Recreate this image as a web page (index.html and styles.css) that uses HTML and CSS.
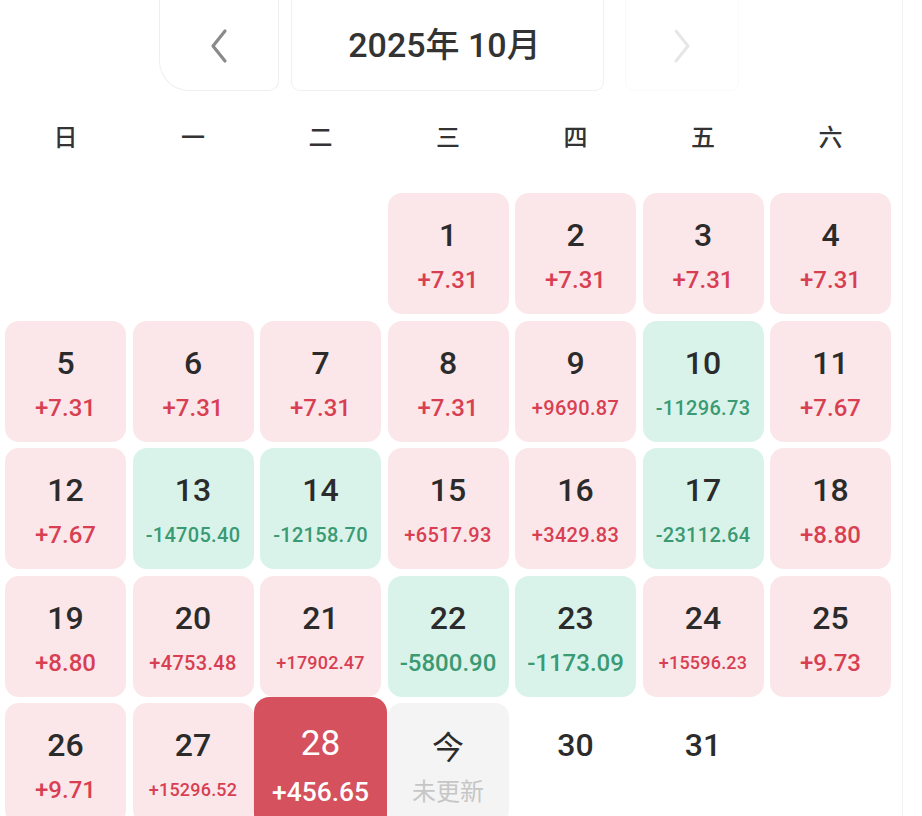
FILE: index.html
```html
<!DOCTYPE html>
<html lang="zh-CN">
<head>
<meta charset="utf-8">
<title>2025年 10月</title>
<link rel="stylesheet" href="styles.css">
</head>
<body>
<div class="page">
  <div class="header">
    <div class="nav-btn prev">
      <svg width="26" height="36" viewBox="0 0 26 36"><path d="M19 3 L7 18 L19 33" fill="none" stroke="#8a8a8a" stroke-width="3.2" stroke-linecap="round" stroke-linejoin="round"/></svg>
    </div>
    <div class="title">2025年 10月</div>
    <div class="nav-btn next">
      <svg width="26" height="36" viewBox="0 0 26 36"><path d="M7 3 L19 18 L7 33" fill="none" stroke="#e6e6e6" stroke-width="3" stroke-linecap="round" stroke-linejoin="round"/></svg>
    </div>
  </div>

  <div class="weekdays">
    <div>日</div><div>一</div><div>二</div><div>三</div><div>四</div><div>五</div><div>六</div>
  </div>

  <div class="grid">
    <div class="blank"></div><div class="blank"></div><div class="blank"></div>
    <div class="cell up"><span class="d">1</span><span class="v lg">+7.31</span></div>
    <div class="cell up"><span class="d">2</span><span class="v lg">+7.31</span></div>
    <div class="cell up"><span class="d">3</span><span class="v lg">+7.31</span></div>
    <div class="cell up"><span class="d">4</span><span class="v lg">+7.31</span></div>

    <div class="cell up"><span class="d">5</span><span class="v lg">+7.31</span></div>
    <div class="cell up"><span class="d">6</span><span class="v lg">+7.31</span></div>
    <div class="cell up"><span class="d">7</span><span class="v lg">+7.31</span></div>
    <div class="cell up"><span class="d">8</span><span class="v lg">+7.31</span></div>
    <div class="cell up"><span class="d">9</span><span class="v md">+9690.87</span></div>
    <div class="cell down"><span class="d">10</span><span class="v md">-11296.73</span></div>
    <div class="cell up"><span class="d">11</span><span class="v lg">+7.67</span></div>

    <div class="cell up"><span class="d">12</span><span class="v lg">+7.67</span></div>
    <div class="cell down"><span class="d">13</span><span class="v md">-14705.40</span></div>
    <div class="cell down"><span class="d">14</span><span class="v md">-12158.70</span></div>
    <div class="cell up"><span class="d">15</span><span class="v md">+6517.93</span></div>
    <div class="cell up"><span class="d">16</span><span class="v md">+3429.83</span></div>
    <div class="cell down"><span class="d">17</span><span class="v md">-23112.64</span></div>
    <div class="cell up"><span class="d">18</span><span class="v lg">+8.80</span></div>

    <div class="cell up"><span class="d">19</span><span class="v lg">+8.80</span></div>
    <div class="cell up"><span class="d">20</span><span class="v md">+4753.48</span></div>
    <div class="cell up"><span class="d">21</span><span class="v sm">+17902.47</span></div>
    <div class="cell down"><span class="d">22</span><span class="v lg">-5800.90</span></div>
    <div class="cell down"><span class="d">23</span><span class="v lg">-1173.09</span></div>
    <div class="cell up"><span class="d">24</span><span class="v sm">+15596.23</span></div>
    <div class="cell up"><span class="d">25</span><span class="v lg">+9.73</span></div>

    <div class="cell up"><span class="d">26</span><span class="v lg">+9.71</span></div>
    <div class="cell up"><span class="d">27</span><span class="v sm">+15296.52</span></div>
    <div class="cell selected"><span class="d">28</span><span class="v lg">+456.65</span></div>
    <div class="cell today"><span class="d">今</span><span class="v lg">未更新</span></div>
    <div class="cell future"><span class="d">30</span></div>
    <div class="cell future"><span class="d">31</span></div>
  </div>
</div>
</body>
</html>
```

FILE: styles.css
```css
html, body {
  margin: 0;
  padding: 0;
  background: #ffffff;
}
body {
  font-family: Roboto, "Noto Sans CJK SC", sans-serif;
  color: #2b2b2b;
  overflow: hidden;
}
.page {
  width: 902px;
  height: 816px;
  border-right: 1px solid #f1f1f1;
  overflow: hidden;
}
.header {
  display: flex;
  align-items: flex-end;
  height: 91px;
  padding-left: 159px;
}
.nav-btn {
  height: 104px;
  display: flex;
  align-items: center;
  justify-content: center;
  box-sizing: border-box;
}
.nav-btn svg {
  margin-top: 14px;
}
.prev {
  width: 120px;
  border: 1px solid #efefef;
  border-top: none;
  border-radius: 0 0 10px 30px;
}
.title {
  width: 313px;
  height: 91px;
  margin-left: 12px;
  border: 1px solid #f0f0f0;
  border-top: none;
  border-radius: 0 0 9px 9px;
  box-sizing: border-box;
  display: flex;
  align-items: center;
  justify-content: center;
  font-size: 34px;
  font-weight: 500;
  color: #333;
  padding-bottom: 6px;
  padding-right: 6px;
}
.next {
  width: 114px;
  margin-left: 21px;
  border: 1px solid #fafafa;
  border-top: none;
  border-radius: 0 0 8px 8px;
}
.weekdays {
  display: grid;
  grid-template-columns: repeat(7, 121px);
  column-gap: 6.5px;
  padding-left: 5px;
  height: 102px;
  align-items: center;
  font-family: "Noto Sans CJK SC", sans-serif;
  font-size: 24px;
  font-weight: 500;
  color: #333;
  text-align: center;
}
.weekdays div {
  margin-top: -13px;
}
.grid {
  display: grid;
  grid-template-columns: repeat(7, 121px);
  grid-auto-rows: 121px;
  gap: 6.5px;
  padding-left: 5px;
}
.cell {
  border-radius: 14px;
  display: flex;
  flex-direction: column;
  align-items: center;
  box-sizing: border-box;
  padding-top: 22px;
}
.d {
  font-size: 32px;
  font-weight: 500;
  line-height: 40px;
  color: #2b2b2b;
}
.v {
  margin-top: 10px;
  line-height: 30px;
  font-weight: 500;
  white-space: nowrap;
}
.v.lg { font-size: 24px; }
.v.md { font-size: 20px; letter-spacing: 0.3px; }
.v.sm { font-size: 18px; letter-spacing: 0.2px; }
.up {
  background: #fbe7e9;
}
.up .v {
  color: #d83f52;
}
.down {
  background: #d9f3eb;
}
.down .v {
  color: #3a9a73;
}
.selected {
  background: #d4515d;
  transform: scale(1.1);
  transform-origin: center 50%;
  z-index: 1;
}
.selected .d, .selected .v {
  color: #ffffff;
}
.selected .d { font-weight: 400; }
.today {
  background: #f4f4f4;
}
.today .d {
  font-family: "Noto Sans CJK SC", sans-serif;
  font-weight: 400;
}
.today .v {
  font-family: "Noto Sans CJK SC", sans-serif;
  font-weight: 400;
  color: #c6c6c6;
}
.future {
  background: #ffffff;
}
```
